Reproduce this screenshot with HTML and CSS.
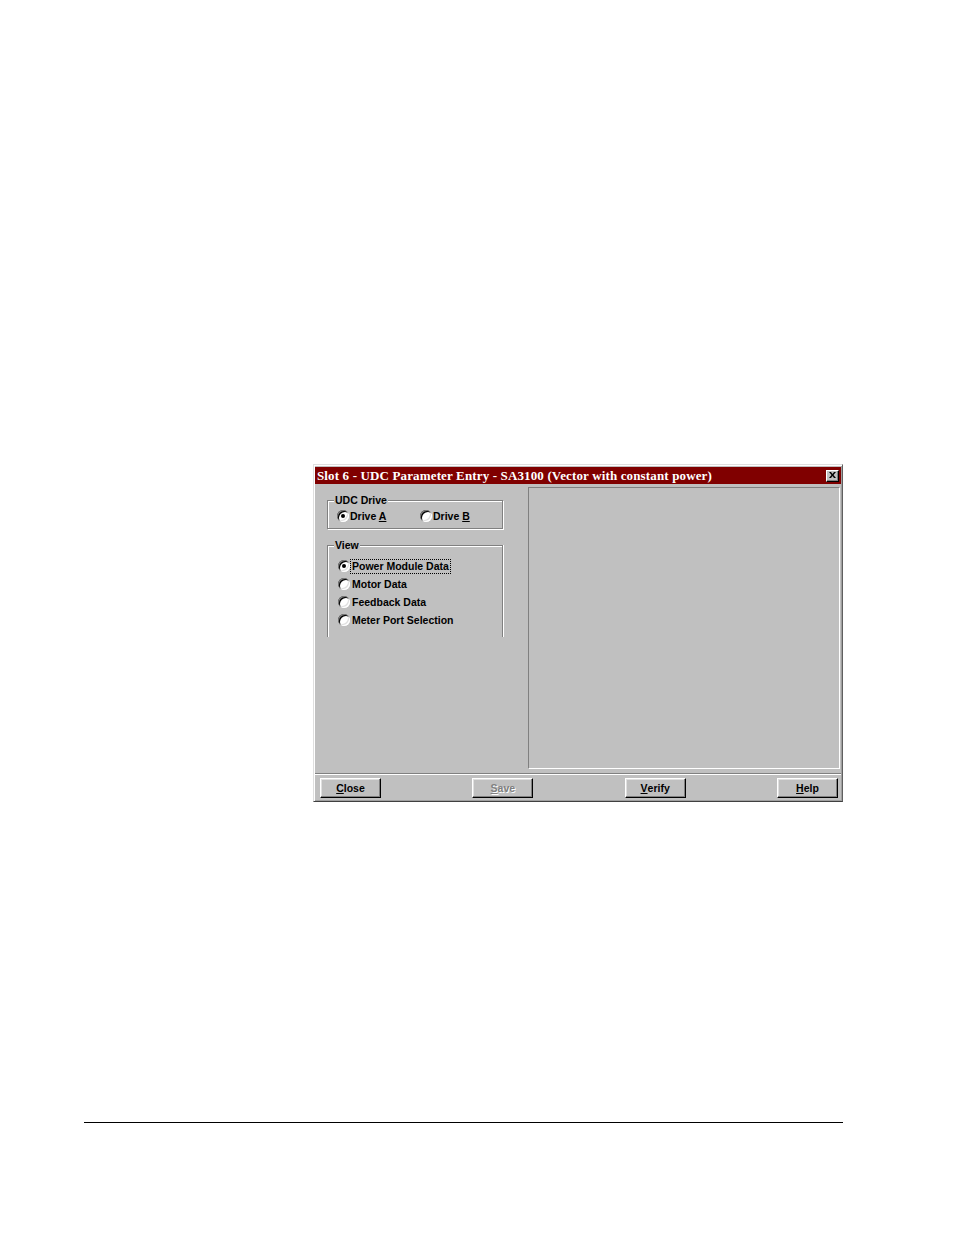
FILE: index.html
```html
<!DOCTYPE html>
<html>
<head>
<meta charset="utf-8">
<title>Slot 6 - UDC Parameter Entry</title>
<link rel="stylesheet" href="styles.css">
</head>
<body>
<div class="page">
  <div class="window">
    <div class="titlebar">
      <span class="title-text">Slot 6 - UDC Parameter Entry - SA3100 (Vector with constant power)</span>
      <span class="close-btn">
        <svg width="7" height="6" viewBox="0 0 7 6"><path d="M0 0h2l1.5 2 1.5-2h2l-2.5 3 2.5 3h-2l-1.5-2-1.5 2h-2l2.5-3z" fill="#000"/></svg>
      </span>
    </div>
    <div class="body">
      <div class="left">
        <div class="group group-drive">
          <div class="group-label">UDC Drive</div>
          <div class="radio-row">
            <div class="opt opt-a"><span class="radio checked"></span><span class="lbl">Drive <u>A</u></span></div>
            <div class="opt"><span class="radio"></span><span class="lbl">Drive <u>B</u></span></div>
          </div>
        </div>
        <div class="group group-view">
          <div class="group-label">View</div>
          <div class="view-list">
            <div class="opt view-opt"><span class="radio checked"></span><span class="lbl focus">Power Module Data</span></div>
            <div class="opt view-opt"><span class="radio"></span><span class="lbl">Motor Data</span></div>
            <div class="opt view-opt"><span class="radio"></span><span class="lbl">Feedback Data</span></div>
            <div class="opt view-opt"><span class="radio"></span><span class="lbl">Meter Port Selection</span></div>
          </div>
        </div>
      </div>
      <div class="right-panel"></div>
    </div>
    <div class="separator"></div>
    <div class="buttons">
      <div class="btn"><u>C</u>lose</div>
      <div class="btn disabled"><u>S</u>ave</div>
      <div class="btn"><u>V</u>erify</div>
      <div class="btn"><u>H</u>elp</div>
    </div>
  </div>
  <div class="rule"></div>
</div>
</body>
</html>
```
FILE: styles.css
```css
* { box-sizing: border-box; }
html, body { margin: 0; padding: 0; background: #fff; }
body { font-family: "Liberation Sans", Arial, sans-serif; }

.page {
  display: flex;
  flex-direction: column;
  align-items: flex-start;
  padding-top: 464px;
}

.window {
  margin-left: 313px;
  width: 530px;
  height: 338px;
  background: #c0c0c0;
  border: 1px solid;
  border-color: #dfdfdf #606060 #404040 #dfdfdf;
  box-shadow: inset 1px 1px #fff, inset -1px -1px #a0a0a0;
  padding: 2px 1px 1px 1px;
  display: flex;
  flex-direction: column;
}

.titlebar {
  height: 17px;
  flex: none;
  background: #800000;
  display: flex;
  align-items: center;
  justify-content: space-between;
  padding-left: 2px;
  padding-right: 2px;
}
.title-text {
  font-family: "Liberation Serif", "Times New Roman", serif;
  font-weight: bold;
  font-size: 13px;
  letter-spacing: 0.14px;
  color: #fff;
  white-space: nowrap;
  line-height: 17px;
}
.close-btn {
  width: 13px;
  height: 12px;
  background: #c0c0c0;
  border: 1px solid;
  border-color: #fff #000 #000 #fff;
  box-shadow: inset -1px -1px #808080;
  display: flex;
  align-items: center;
  justify-content: center;
  padding-bottom: 1px;
  padding-right: 1px;
}
.close-btn svg { display: block; }

.body {
  height: 289px;
  flex: none;
  display: flex;
}
.left {
  width: 213px;
  flex: none;
  padding-top: 16px;
  padding-left: 12px;
}
.group {
  width: 176px;
  border: 1px solid #808080;
  box-shadow: inset 1px 1px #fff, 1px 1px #fff;
}
.group-drive { height: 29px; }
.group-view {
  margin-top: 16px;
  height: 92px;
  border-bottom: 0;
  box-shadow: inset 1px 1px #fff, 1px 0 #fff;
}
.group-label {
  width: max-content;
  margin-top: -7px;
  margin-left: 6px;
  padding: 0 1px;
  background: #c0c0c0;
  font-size: 10.5px;
  font-weight: bold;
  line-height: 13px;
  color: #000;
}
.radio-row {
  display: flex;
  height: 18px;
  align-items: center;
  padding-left: 9px;
}
.opt {
  display: flex;
  align-items: center;
  font-size: 10.5px;
  font-weight: bold;
  color: #000;
  white-space: nowrap;
}
.opt-a { width: 83px; }
.lbl { margin-left: 0; line-height: 13px; padding: 0 1px; }
.focus { outline: 1px dotted #000; outline-offset: 0; }
.view-list { padding-top: 5px; padding-left: 10px; }
.view-opt { height: 18px; }
.view-opt .lbl { margin-left: 1px; }

.radio {
  width: 12px;
  height: 12px;
  flex: none;
  border-radius: 50%;
  background: #fff;
  box-shadow: inset 1px 1px #808080, inset -1px -1px #fff, inset 2px 2px #000, inset -2px -2px #dfdfdf;
  display: flex;
  align-items: center;
  justify-content: center;
}
.radio.checked::after {
  content: "";
  width: 4px;
  height: 4px;
  border-radius: 50%;
  background: #000;
}

.right-panel {
  flex: 1;
  margin: 3px 1px 4px 0;
  border: 1px solid;
  border-color: #808080 #fff #fff #808080;
}

.separator {
  height: 2px;
  flex: none;
  border-top: 1px solid #808080;
  border-bottom: 1px solid #fff;
}

.buttons {
  flex: 1;
  display: flex;
  justify-content: space-between;
  align-items: flex-start;
  padding: 3px 3px 0 5px;
}
.btn {
  width: 61px;
  height: 20px;
  border: 1px solid;
  border-color: #fff #000 #000 #fff;
  box-shadow: inset -1px -1px #808080, inset 1px 1px #dfdfdf;
  display: flex;
  align-items: center;
  justify-content: center;
  font-size: 10.5px;
  font-weight: bold;
  color: #000;
  padding-bottom: 1px;
}
.btn.disabled {
  color: #808080;
  text-shadow: 1px 1px #fff;
}

.rule {
  margin-left: 84px;
  margin-top: 320px;
  width: 759px;
  height: 1px;
  background: #000;
}
```
